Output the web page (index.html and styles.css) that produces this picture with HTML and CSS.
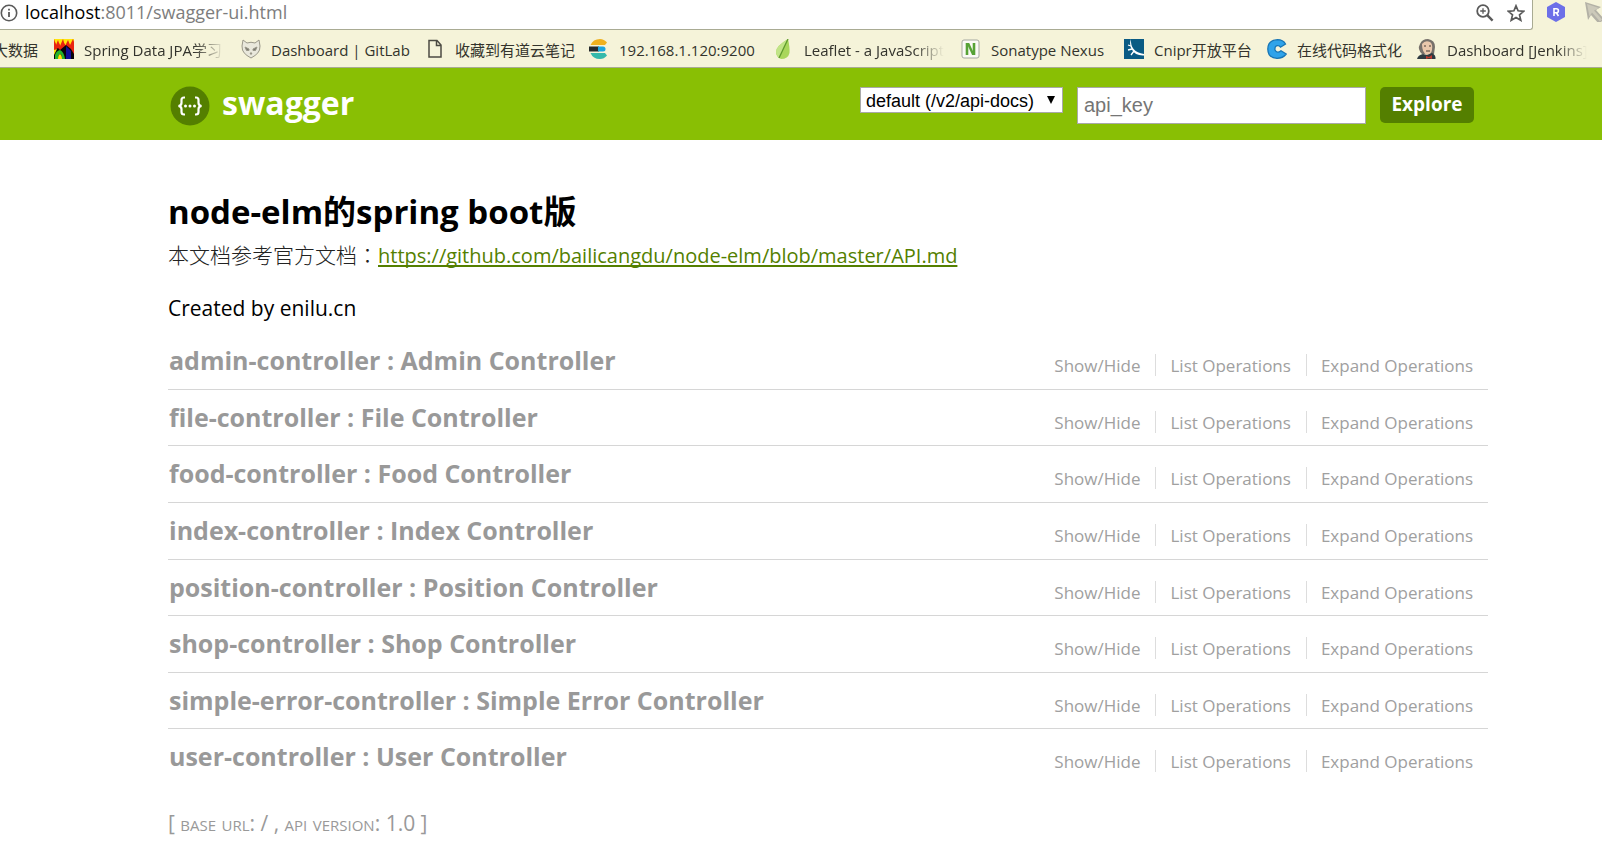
FILE: index.html
```
<!DOCTYPE html>
<html lang="zh-CN">
<head>
<meta charset="utf-8">
<title>Swagger UI</title>
<link rel="stylesheet" href="styles.css">
</head>
<body>
<div class="toolbar">
  <div class="address">
    <svg class="info" viewBox="0 0 18 18" width="18" height="18"><circle cx="9" cy="9" r="7.7" fill="none" stroke="#5a5a5a" stroke-width="1.6"/><path d="M9 8v5M9 4.8v1.8" stroke="#5a5a5a" stroke-width="1.8"/></svg>
    <span class="url"><span class="host">localhost</span>:8011/swagger-ui.html</span>
    <button class="tool" aria-label="Zoom"><svg viewBox="0 0 18 18" width="18" height="18" fill="none" stroke="#5a5a5a" stroke-width="1.8"><circle cx="7" cy="7" r="5.8"/><path d="M11.2 11.2l5.4 5.4" stroke-width="2.4"/><path d="M7 4.2v5.6M4.2 7h5.6" stroke-width="1.3"/></svg></button>
    <button class="tool" aria-label="Bookmark"><svg viewBox="0 0 18 18" width="18" height="18" fill="none" stroke="#5a5a5a" stroke-width="1.7"><path d="M9 1.800l2.100 5 5.600.5-4.200 3.600 1.300 5.400L9 13.400l-4.800 2.900 1.300-5.400-4.200-3.600 5.600-.5z"/></svg></button>
  </div>
  <div class="extensions">
    <svg viewBox="0 0 20 20" width="20" height="20"><path d="M10 0l9 5v10l-9 5-9-5V5z" fill="#6c6fe8"/><path d="M8 14V6.800h2.400a2 2 0 0 1 0 4H8M10.500 11l2 3" fill="none" stroke="#fff" stroke-width="1.600"/></svg>
    <svg viewBox="0 0 20 20" width="20" height="20"><path d="M1 0l16 5-5 3 8 9-5 5-8-9-3 5z" fill="#b3b1a6"/><path d="M3 2l12 4-5 2.500 8 9-2 2-8-9-2.500 4z" fill="#ccc9ba"/></svg>
  </div>
</div>
<nav class="bookmarks">
  <a class="bookmark first" href="#"><span class="label">大数据</span></a>
  <a class="bookmark" href="#"><svg viewBox="0 0 20 20" width="20" height="20"><path d="M0 0h20v20H0z" fill="#e9230f"/><path d="M0 0l2 6 2-5 2 6 3-7 2 7 3-6 2 5 3-6 1 3V0z" fill="#ffe50a"/><path d="M1 3l2 5 2-4 2 5 3-5 2 3 2-3 4 6 1-3v5H0V5z" fill="#e9230f"/><path d="M0 12l4-3 2 2 6-5 5 4 3 5v5h-9L0 20z" fill="#09050a"/><path d="M0 11l3-1-3 6z" fill="#ffe50a"/><path d="M12 7l5 5v8h-5z" fill="#11109a"/><path d="M1 20v-4q1-4 5-5 4 2 5 9H8q0-5-2-5-2 1-2 5z" fill="#25b52b"/><path d="M4 20q0-4 2-5 2 1 2 5z" fill="#ffe50a"/></svg><span class="label">Spring Data JPA学习</span></a>
  <a class="bookmark" href="#"><svg viewBox="0 0 20 20" width="20" height="20" fill="#e9e8dc" stroke="#999789" stroke-width="1"><path d="M2 1l4 3q4-1.500 8 0l4-3 1 6-.5 4q-1 3-4.500 5.500L10 19l-4-2.500Q2.500 14 1.500 11L1 7z"/><path d="M4 8l4 2v1.500H5.500zM16 8l-4 2v1.500h2.500z" fill="#77766d"/><path d="M9 14h2l-1 1.500z" fill="#77766d"/></svg><span class="label">Dashboard | GitLab</span></a>
  <a class="bookmark" href="#"><svg viewBox="0 0 20 20" width="20" height="20" fill="none" stroke="#4c4b43" stroke-width="1.500"><path d="M4 1.500h8l4 4.500v12H4zM11.500 1.500V6.500H16"/></svg><span class="label">收藏到有道云笔记</span></a>
  <a class="bookmark" href="#"><svg viewBox="0 0 20 20" width="20" height="20"><path d="M1.500 6Q4 0 11 0q4 0 7 3.500L16 6z" fill="#efb11f"/><path d="M0 7.500h10v5H0z" fill="#252a2d"/><path d="M9 7.500h5a2.500 2.500 0 0 1 0 5H9z" fill="#1ba5df"/><path d="M1.500 14H16l2 2.500Q15 20 11 20 4 20 1.500 14z" fill="#34b9ab"/></svg><span class="label">192.168.1.120:9200</span></a>
  <a class="bookmark" href="#"><svg viewBox="0 0 20 20" width="20" height="20"><path d="M14 0Q2 7 2 13q0 5 5 7 7 0 8.500-6Q16 9 14 0z" fill="#a9d65c"/><path d="M14 0Q2 7 2 13q0 3 3 6z" fill="#c1e486"/><path d="M14 0L5 19" stroke="#5f9a2d" stroke-width="1.300"/></svg><span class="label">Leaflet - a JavaScript</span></a>
  <a class="bookmark" href="#"><svg viewBox="0 0 20 20" width="20" height="20"><rect x="1" y="1" width="17" height="18" rx="2" fill="#fafaf5" stroke="#a5a9a0"/><path d="M6 16V4M13 16V4" stroke="#56a236" stroke-width="2.600"/><path d="M5.500 4h2.700l5.600 12h-2.700z" fill="#56a236"/></svg><span class="label">Sonatype Nexus</span></a>
  <a class="bookmark" href="#"><svg viewBox="0 0 20 20" width="20" height="20"><path d="M0 0h20v20H0z" fill="#0a5b84"/><path d="M7 0q-1 13 13 15v1.500Q11 17 7.500 10 5 5 7 0z" fill="#fff"/><path d="M10 0q0 10 10 13.500V0z" fill="#0a5b84"/><path d="M4 6l3 1M4 11l4-1M7 16l3-4" stroke="#fff" stroke-width="1.300"/></svg><span class="label">Cnipr开放平台</span></a>
  <a class="bookmark" href="#"><svg viewBox="0 0 20 20" width="20" height="20"><path d="M18.500 5Q16 .7 10.500.7 1 1 .8 10 1 19 10 19.300q6 0 9.200-4.300L14 11.800q-4 3.200-6-.8-.5-4.500 3-4.300 1.500 0 2.500 1.500z" fill="#2fa3ea" stroke="#1775b5" stroke-width="1.300"/></svg><span class="label">在线代码格式化</span></a>
  <a class="bookmark" href="#"><svg viewBox="0 0 20 20" width="20" height="20"><path d="M3 5q2-5 8-5 7 1 7 8l-1 7H5Q0 10 3 5z" fill="#77716b"/><path d="M5 5q3-4 8-2 3 2 2 8-1 5-5 5-5-2-5-11z" fill="#e9c7ac"/><path d="M0 20q1-4 6-5l4 1 5-2q4 2 3.500 6z" fill="#2e3a41"/><path d="M9 17l3 1 3-2v4l-3-1-3 1z" fill="#c23b30"/><path d="M7 7h2M12 7h2M9 12h4" stroke="#443a34" stroke-width="1.200"/></svg><span class="label">Dashboard [Jenkins]</span></a>
</nav>
<header class="header">
  <a class="logo" href="#"><svg viewBox="0 0 40 40" width="40" height="40"><circle cx="20" cy="20" r="19.500" fill="#547f00"/><g fill="none" stroke="#fff" stroke-width="2.200"><path d="M15 11.500h-1q-2.500 0-2.500 2.500v3q0 2.500-3 3 3 .5 3 3v3q0 2.500 2.500 2.500h1M25 11.500h1q2.500 0 2.500 2.500v3q0 2.500 3 3-3 .5-3 3v3q0 2.500-2.500 2.500h-1"/></g><g fill="#fff"><circle cx="15.500" cy="20" r="1.500"/><circle cx="20" cy="20" r="1.500"/><circle cx="24.500" cy="20" r="1.500"/></g></svg><span>swagger</span></a>
  <form class="selector">
    <div class="select-wrap"><select aria-label="API docs"><option>default (/v2/api-docs)</option></select><svg class="arrow" viewBox="0 0 8 8" width="8" height="8"><path d="M0 0h8L4 8z"/></svg></div>
    <input class="key" type="text" placeholder="api_key" aria-label="api_key">
    <button class="explore" type="button">Explore</button>
  </form>
</header>
<main class="content">
  <h1>node-elm的spring boot版</h1>
  <p class="description">本文档参考官方文档<span class="colon" lang="zh-TW">：</span><a href="#">https://github.com/bailicangdu/node-elm/blob/master/API.md</a></p>
  <p class="author">Created by enilu.cn</p>
  <ul class="resources">
    <li><h2><a href="#">admin-controller : Admin Controller</a></h2><div class="options"><a href="#">Show/Hide</a><a href="#">List Operations</a><a href="#">Expand Operations</a></div></li>
    <li><h2><a href="#">file-controller : File Controller</a></h2><div class="options"><a href="#">Show/Hide</a><a href="#">List Operations</a><a href="#">Expand Operations</a></div></li>
    <li><h2><a href="#">food-controller : Food Controller</a></h2><div class="options"><a href="#">Show/Hide</a><a href="#">List Operations</a><a href="#">Expand Operations</a></div></li>
    <li><h2><a href="#">index-controller : Index Controller</a></h2><div class="options"><a href="#">Show/Hide</a><a href="#">List Operations</a><a href="#">Expand Operations</a></div></li>
    <li><h2><a href="#">position-controller : Position Controller</a></h2><div class="options"><a href="#">Show/Hide</a><a href="#">List Operations</a><a href="#">Expand Operations</a></div></li>
    <li><h2><a href="#">shop-controller : Shop Controller</a></h2><div class="options"><a href="#">Show/Hide</a><a href="#">List Operations</a><a href="#">Expand Operations</a></div></li>
    <li><h2><a href="#">simple-error-controller : Simple Error Controller</a></h2><div class="options"><a href="#">Show/Hide</a><a href="#">List Operations</a><a href="#">Expand Operations</a></div></li>
    <li><h2><a href="#">user-controller : User Controller</a></h2><div class="options"><a href="#">Show/Hide</a><a href="#">List Operations</a><a href="#">Expand Operations</a></div></li>
  </ul>
  <footer class="footer">[ <span class="caps">base url</span>: / , <span class="caps">api version</span>: 1.0 ]</footer>
</main>
</body>
</html>
```
FILE: styles.css
```
* { box-sizing: border-box; }
body {
  margin: 0;
  background: #fff;
  color: #000;
  font-family: "Open Sans", "Noto Sans CJK SC", sans-serif;
}
a { color: inherit; text-decoration: none; }
button { border: 0; padding: 0; background: none; }
svg { display: block; flex: none; }
h1, h2, p, ul { margin: 0; padding: 0; }

.toolbar { display: flex; height: 30px; background: #f5f3d9; }
.address {
  flex: 1;
  display: flex;
  align-items: center;
  padding-right: 7px;
  padding-bottom: 4px;
  background: #fff;
  border-right: 1px solid #a9ab93;
  border-bottom: 1px solid #a9ab93;
  border-bottom-right-radius: 3px;
}
.url { flex: 1; margin-left: 7px; padding-bottom: 2px; font-size: 18px; line-height: 22px; color: #7d7d7d; }
.host { color: #000; }
.tool { margin-left: 13px; }
.extensions { display: flex; gap: 18px; width: 69px; padding: 2px 0 0 13px; overflow: hidden; }

.bookmarks {
  display: grid;
  grid-template-columns: 54px 187px 184px 164px 185px 187px 163px 143px 150px 1fr;
  align-items: center;
  height: 38px;
  background: #f5f3d9;
  border-bottom: 1px solid #a9ab93;
  overflow: hidden;
}
.bookmark { display: flex; align-items: center; gap: 10px; font-size: 15px; line-height: 22px; color: #33332c; }
.first { width: 38px; justify-content: flex-end; }
.label { max-width: 140px; padding-top: 2px; overflow: hidden; white-space: nowrap; }
.first .label { flex: none; }
.bookmark:nth-child(2) .label,
.bookmark:nth-child(6) .label,
.bookmark:nth-child(10) .label { mask-image: linear-gradient(to right, #000 110px, transparent 140px); }

.header {
  display: flex;
  justify-content: space-between;
  height: 72px;
  padding: 19px 128px 0 170px;
  background: #89bf04;
}
.logo { display: flex; gap: 12px; height: 38px; align-items: center; color: #fff; font-size: 32px; font-weight: 700; line-height: 32px; }
.logo span { padding-bottom: 6px; }
.selector { display: flex; align-items: flex-start; gap: 14px; }
.select-wrap { position: relative; }
.selector select {
  appearance: none;
  display: block;
  width: 203px;
  height: 26px;
  padding: 1px 5px 0;
  border: 1px solid #a9a9a9;
  border-radius: 0;
  background: #fff;
  color: #000;
  font: 18px "Liberation Sans", Arial, sans-serif;
}
.arrow { position: absolute; top: 9px; right: 8px; }
.key {
  width: 289px;
  height: 37px;
  padding: 0 6px;
  border: 1px solid #a9a9a9;
  font: 20px "Liberation Sans", Arial, sans-serif;
}
.key::placeholder { color: #757575; }
.explore {
  width: 94px;
  height: 36px;
  padding-bottom: 3px;
  border-radius: 5px;
  background: #547f00;
  color: #fff;
  font: 700 19px "Open Sans", sans-serif;
}

.content { padding: 48px 114px 0 168px; }
h1 { font-size: 33px; line-height: 48px; }
.description { margin-top: 4px; font-size: 21px; font-weight: 300; line-height: 28px; color: #222; }
.description a { font-size: 20px; font-weight: 400; color: #547f00; text-decoration: underline; text-decoration-thickness: 2px; text-underline-offset: 2px; text-decoration-skip-ink: none; }
.colon { font-family: "Noto Sans CJK TC", sans-serif; }
.author { margin-top: 23px; font-size: 21px; line-height: 30px; }
.resources { display: grid; grid-auto-rows: 1fr; min-height: 453px; margin-top: 10px; list-style: none; }
.resources li {
  display: flex;
  justify-content: space-between;
  padding: 9px 0 0 1px;
  border-bottom: 1px solid #d6d6d6;
  color: #999;
}
.resources li:last-child { border-bottom: 0; }
h2 { font-size: 25px; line-height: 36px; }
.options { display: flex; height: 22px; margin-top: 12px; font-size: 17px; line-height: 23px; color: #a0a0a0; }
.options a { padding: 0 15px 0 14px; border-left: 1px solid #ddd; }
.options a:first-child { border-left: 0; }
.footer { margin-top: 20px; font-size: 21px; line-height: 34px; color: #999; }
.caps { font-variant: small-caps; }
```
